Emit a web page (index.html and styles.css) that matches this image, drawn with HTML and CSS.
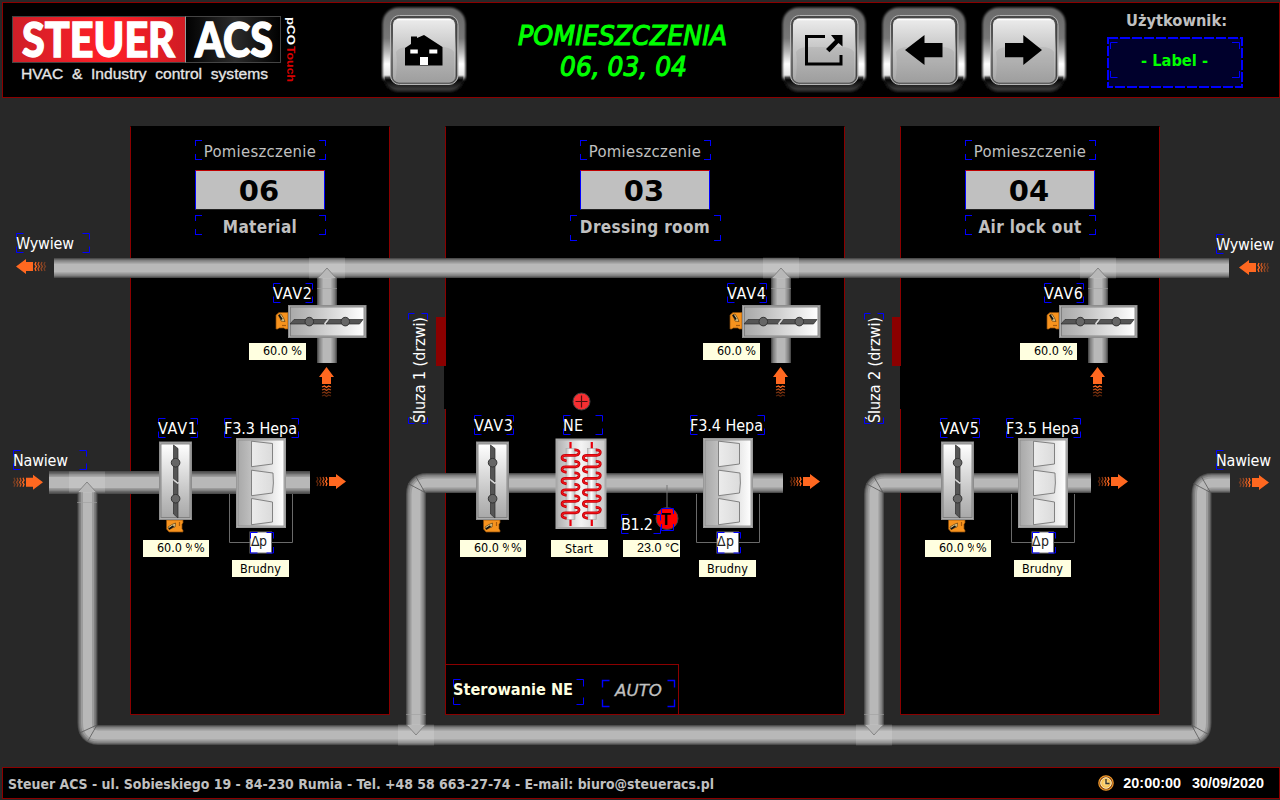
FILE: index.html
```html
<!DOCTYPE html>
<html lang="pl">
<head>
<meta charset="utf-8">
<title>Steuer ACS</title>
<link rel="stylesheet" href="styles.css">
</head>
<body>
<svg class="defs" width="0" height="0">
  <defs>
    <linearGradient id="rim" x1="0" y1="0" x2="0" y2="1">
      <stop offset="0" stop-color="#6a6a6a"/><stop offset=".36" stop-color="#777"/><stop offset=".52" stop-color="#b4b4b4"/>
      <stop offset=".68" stop-color="#fff"/><stop offset=".82" stop-color="#e6e6e6"/><stop offset=".85" stop-color="#444"/><stop offset=".88" stop-color="#050505"/><stop offset="1" stop-color="#3c3c3c"/>
    </linearGradient>
    <linearGradient id="face" x1="0" y1="0" x2="0" y2="1">
      <stop offset="0" stop-color="#ececec"/><stop offset=".47" stop-color="#c6c6c6"/><stop offset="1" stop-color="#a9a9a9"/>
    </linearGradient>
    <linearGradient id="frame" x1="0" y1="0" x2="0" y2="1">
      <stop offset="0" stop-color="#4a4a4a"/><stop offset=".3" stop-color="#666"/><stop offset=".5" stop-color="#999"/><stop offset="1" stop-color="#777"/>
    </linearGradient>
    <linearGradient id="steel"><stop offset="0" stop-color="#a9a9a9"/><stop offset=".2" stop-color="#b8b8b8"/><stop offset="1" stop-color="#fff"/></linearGradient>
    <linearGradient id="steelMid"><stop offset="0" stop-color="#b0b0b0"/><stop offset=".5" stop-color="#f4f4f4"/><stop offset="1" stop-color="#c8c8c8"/></linearGradient>
    <linearGradient id="tube"><stop offset="0" stop-color="#bbb"/><stop offset=".45" stop-color="#fff"/><stop offset="1" stop-color="#bbb"/></linearGradient>
    <linearGradient id="pocketFill"><stop offset="0" stop-color="#fafafa"/><stop offset="1" stop-color="#d6d6d6"/></linearGradient>
    <linearGradient id="logoRed"><stop offset="0" stop-color="#cf1f28"/><stop offset=".55" stop-color="#ff1f27"/><stop offset="1" stop-color="#d01c24"/></linearGradient>
    <linearGradient id="logoDark"><stop offset="0" stop-color="#000"/><stop offset=".64" stop-color="#000"/><stop offset=".83" stop-color="#2b2b2b"/><stop offset="1" stop-color="#000"/></linearGradient>
    <radialGradient id="gold"><stop offset="0" stop-color="#ffe9a0"/><stop offset="1" stop-color="#f5b63c"/></radialGradient>
    <filter id="soft" x="-10%" y="-10%" width="120%" height="120%"><feGaussianBlur stdDeviation="1"/></filter>

    <g id="plate">
      <rect x="1.5" y="1.5" width="83" height="84" rx="16" fill="url(#rim)" filter="url(#soft)"/>
      <rect x="3.5" y="3.5" width="79" height="80" rx="14" fill="url(#rim)"/>
      <rect x="9.500" y="9.500" width="67.500" height="69" rx="9" fill="url(#frame)" stroke="#b5b5b5"/>
      <rect x="11" y="11" width="64.500" height="66" rx="7" fill="none" stroke="#444"/>
      <rect x="12" y="12.500" width="62" height="64" rx="6" fill="url(#face)"/>
      <path d="M16 13.500H70" stroke="#fff" stroke-width="1.500"/>
      <path d="M14 76Q17 60 15 46Q18 41 27 41H60Q70 41 73 46V72Q73 76 68 76Z" fill="#000" opacity=".06"/>
    </g>

    <g id="actuator">
      <path d="M-12 10L-9 7.500H0V24H-3L-4 23H-9L-10 24H-12Z" fill="#f7931e" stroke="#8a4a08" stroke-width=".7"/>
      <path d="M-9.500 10L-7 9L-4.500 13L-3 16.500L-7 16L-8 13Z" fill="#e8cf8e" stroke="#5a3a10" stroke-width=".7"/>
      <path d="M-9 10L-6 14.500" stroke="#111" stroke-width="1.800"/>
      <path d="M-6 20.500H-2" stroke="#a85b0c" stroke-width="1.200"/>
    </g>
    <g id="damper">
      <use href="#actuator"/>
      <rect x=".5" y=".5" width="77.500" height="32" fill="#aeaeae" stroke="#8d8d8d"/>
      <rect x="2.500" y="2" width="73.500" height="29" fill="url(#steel)" stroke="#777" stroke-width=".8"/>
      <path d="M2 19L6 14.500H40L36.500 19Z" fill="#555" stroke="#2c2c2c" stroke-width=".7"/>
      <path d="M38 19L41.500 14.500H75L71.500 19Z" fill="#555" stroke="#2c2c2c" stroke-width=".7"/>
      <path d="M36.500 19L40 14.500" stroke="#ddd" stroke-width="1.300"/>
      <circle cx="21.300" cy="16.600" r="4.300" fill="#666" stroke="#333"/>
      <circle cx="57.300" cy="16.600" r="4.300" fill="#666" stroke="#333"/>
    </g>
    <g id="filter">
      <path d="M229.500 494V542.500H292.500V494" class="capillary"/>
      <rect x="236.500" y="438.500" width="49" height="89" fill="#bbb" stroke="#999"/>
      <rect x="238" y="440" width="46" height="86" fill="url(#steel)" stroke="#888" stroke-width=".8"/>
      <g class="pocket"><path d="M251.500 441.200L272.500 443.500V464L251.500 466.700Z"/><path d="M251.500 470.200L273 473Q274 483 272.500 493L251.500 495.700Z"/><path d="M251.500 498.500L272.500 502V522L251.500 524.700Z"/></g>
      <rect x="250" y="532" width="21.500" height="21" fill="#fff" stroke="#777"/>
    </g>
    <g id="flow">
      <path d="M0 0L10 -7.500V-4.500H17V4.500H10V7.500Z" fill="#ff6820"/>
      <g fill="none" stroke="#ff6820" stroke-width="1.300">
        <path d="M20 -4.500L19 -2L20.500 0L19 2L20 4.500"/><path d="M23 -4.500L22 -2L23.500 0L22 2L23 4.500" opacity=".75"/>
        <path d="M26 -4.500L25 -2L26.500 0L25 2L26 4.500" opacity=".5"/><path d="M29 -4.500L28 -2L29.500 0L28 2L29 4.500" opacity=".35"/>
      </g>
    </g>
    <path id="turn" d="M4 -5.500Q9 -5.500 8.500 -2.500Q8 0 5 0H-5Q-8.500 0 -8.500 2.800Q-8.500 5 -4 5.500"/>
    <g id="turns"><use href="#turn" y="-28.700"/><use href="#turn" y="-17.200"/><use href="#turn" y="-5.700"/><use href="#turn" y="5.800"/><use href="#turn" y="17.300"/><use href="#turn" y="28.800"/></g>
    <g id="coil">
      <path d="M0 -42V-35M0 35V42" stroke="#e8000c" stroke-width="2.200"/>
      <rect x="-4.500" y="-35.500" width="9" height="71" fill="url(#tube)" stroke="#aaa" stroke-width=".6"/>
      <use href="#turns" fill="none" stroke="#c4000c" stroke-width="2.700"/>
      <use href="#turns" fill="none" stroke="#ff1a1a" stroke-width="1"/>
    </g>
    <g id="tee">
      <rect x="-18" y="-10.500" width="36" height="21" fill="#fff" opacity=".15"/>
      <path d="M-9 10L0 0L9 10" fill="#b8b8b8" stroke="#858585"/>
      <path d="M-10 20.500H10" stroke="#a0a0a0" opacity=".6"/>
    </g>
    <path id="ducts" d="M54 268H1229M327 268V363M781 268V363M1098 268V363M1230 483H1212Q1201.500 483 1201.500 494V723Q1201.500 735 1191 735H98Q87.500 735 87.500 723V484M416 735V494Q416 483 427 483H783M874 735V494Q874 483 885 483H1091"/>
  </defs>
</svg>

<header class="topbar">
  <svg class="logo" width="300" height="90" viewBox="5 5 300 90">
    <rect x="12.500" y="16.500" width="268" height="46" fill="url(#logoDark)" stroke="#444"/>
    <rect x="13" y="17" width="172" height="45" fill="url(#logoRed)"/>
    <path d="M185.500 16.500V62.500" stroke="#999"/>
    <text class="brand" x="22" y="57" textLength="153" lengthAdjust="spacingAndGlyphs">STEUER</text>
    <text class="brand" x="195" y="57" textLength="78" lengthAdjust="spacingAndGlyphs">ACS</text>
    <text class="tagline" x="21" y="79" textLength="247" lengthAdjust="spacingAndGlyphs">HVAC &amp; Industry control systems</text>
    <text class="touch" transform="translate(287 17) rotate(90)" textLength="28" lengthAdjust="spacingAndGlyphs">pCO</text>
    <text class="touch red" transform="translate(287 46) rotate(90)" textLength="36" lengthAdjust="spacingAndGlyphs">Touch</text>
  </svg>
  <button class="key home" aria-label="Home">
    <svg width="86" height="87" viewBox="0 0 86 87"><use href="#plate"/><path d="M24 59.500V42L30 38V30.500H36V32L43 29L61.500 41V59.500Z"/><path fill="#fff" d="M29.300 43.500h7.500v4h-7.500zM48.300 43.500h8v4h-8zM39 51h8v8h-8z"/></svg>
  </button>
  <h1 class="title">
    <svg width="250" height="84" viewBox="498 6 250 84">
      <text x="518" y="45" textLength="209" lengthAdjust="spacingAndGlyphs">POMIESZCZENIA</text>
      <text x="560" y="76" textLength="127" lengthAdjust="spacingAndGlyphs">06, 03, 04</text>
    </svg>
  </h1>
  <nav class="keys">
    <button class="key" aria-label="Open"><svg width="86" height="87" viewBox="0 0 86 87"><use href="#plate"/><path d="M44 30.500H25.500V58H60V49" fill="none" stroke="#000" stroke-width="3"/><path d="M50 29H61.500V40.500L57.500 37L48.500 46.300L45 43L54 34Z"/></svg></button>
    <button class="key" aria-label="Previous"><svg width="86" height="87" viewBox="0 0 86 87"><use href="#plate"/><path d="M24 44L43.500 29V37H61.500V51.300H43.500V59Z"/></svg></button>
    <button class="key" aria-label="Next"><svg width="86" height="87" viewBox="0 0 86 87"><use href="#plate"/><path d="M61 44L42.300 29V37H24V51.300H42.300V59Z"/></svg></button>
  </nav>
  <div class="user">
    <svg width="140" height="80" viewBox="1105 10 140 80">
      <text class="bold grey" x="1126" y="26" textLength="101" lengthAdjust="spacingAndGlyphs">Użytkownik:</text>
      <rect x="1108" y="38" width="134" height="49" fill="#00002c" stroke="#00f" stroke-width="2" stroke-dasharray="10 2"/>
      <path class="mark" d="M1117.500 42.500H1110.500V49M1232 42.500H1239.500V49M1117.500 77.500H1110.500V71M1232 77.500H1239.500V71"/>
      <text class="bold green" x="1141" y="66" textLength="67" lengthAdjust="spacingAndGlyphs">- Label -</text>
    </svg>
  </div>
</header>

<main class="plant">
  <section class="room">
    <p class="kind mark-box">Pomieszczenie</p>
    <h2 class="number">06</h2>
    <p class="name mark-box">Material</p>
  </section>
  <section class="room">
    <p class="kind mark-box">Pomieszczenie</p>
    <h2 class="number">03</h2>
    <p class="name mark-box wide">Dressing room</p>
    <div class="control"><svg width="232" height="50" viewBox="446 665 232 50">
      <rect class="mark m-ctl" x="453.500" y="679.500" width="130" height="25"/>
      <rect class="mark m-auto" x="602.500" y="680.500" width="72" height="26"/>
      <text class="bold cream" x="453" y="695" textLength="120" lengthAdjust="spacingAndGlyphs">Sterowanie NE</text>
      <text class="auto" x="615" y="696" textLength="47" lengthAdjust="spacingAndGlyphs">AUTO</text>
    </svg></div>
  </section>
  <section class="room">
    <p class="kind mark-box">Pomieszczenie</p>
    <h2 class="number">04</h2>
    <p class="name mark-box">Air lock out</p>
  </section>

  <svg class="diagram" width="1280" height="669" viewBox="0 98 1280 669">
    <path d="M444 366h3v43h-3zM900 366h2v43h-2z" fill="#000"/>
    <path d="M436 317h10v49h-10zM892 317h9v49h-9z" fill="#8b0000"/>

    <g fill="none">
      <use href="#ducts" class="d1"/><path class="d1 thick" d="M49 482.500H310"/>
      <use href="#ducts" class="d2"/><path class="d2 thick" d="M49 482.500H310"/>
      <use href="#ducts" class="d3"/><path class="d3 thick" d="M49 482.500H310"/>
      <use href="#ducts" class="d4"/><path class="d4 thick" d="M49 482.500H310"/>
      <use href="#ducts" class="d5"/><path class="d5 thick" d="M49 482.500H310"/>
    </g>
    <use href="#tee" x="327" y="268"/><use href="#tee" x="781" y="268"/><use href="#tee" x="1098" y="268"/>
    <use href="#tee" x="87" y="482"/>
    <use href="#tee" transform="translate(416 735) scale(1 -1)"/><use href="#tee" transform="translate(874 735) scale(1 -1)"/>
    <path class="fold" d="M408 483.500L425 492.500L415.500 476M866 483.500L883 492.500L873.500 476M1193.500 483.500L1210.500 492.500L1201 476M79.500 733L97 725L87.500 741.500M1208.500 734.500L1191.500 725L1200.500 741.500"/>

    <use href="#damper" x="288" y="305"/><use href="#damper" x="742" y="305"/><use href="#damper" x="1059" y="305"/>
    <use href="#damper" transform="translate(159 520) rotate(-90)"/><use href="#damper" transform="translate(476 520) rotate(-90)"/><use href="#damper" transform="translate(941 520) rotate(-90)"/>
    <use href="#filter"/><use href="#filter" x="467"/><use href="#filter" x="782"/>

    <rect x="556.500" y="439.500" width="49" height="88.500" fill="url(#steelMid)" stroke="#a8a8a8" stroke-width="2"/>
    <use href="#coil" x="570.500" y="484"/><use href="#coil" x="591.800" y="484"/>
    <circle cx="581.500" cy="401.500" r="8.500" fill="#f62f32" stroke="#444"/>
    <path d="M575.500 401.500H587.500M581.500 395.500V407.500" stroke="#501010" stroke-width="1.200"/>
    <path d="M667 485V508" stroke="#777"/>
    <circle cx="667" cy="518.500" r="11" fill="#f00" stroke="#444"/>
    <text class="probe" x="661" y="525" textLength="11">T</text>

    <use href="#flow" x="16" y="266.500"/><use href="#flow" x="1239" y="267.500"/>
    <use href="#flow" transform="translate(43 482.300) scale(-1 1)"/><use href="#flow" transform="translate(346 481.500) scale(-1 1)"/>
    <use href="#flow" transform="translate(820 481.500) scale(-1 1)"/><use href="#flow" transform="translate(1128 481.500) scale(-1 1)"/><use href="#flow" transform="translate(1269 482.500) scale(-1 1)"/>
    <use href="#flow" transform="translate(326.500 367) rotate(90)"/><use href="#flow" transform="translate(780.500 367) rotate(90)"/><use href="#flow" transform="translate(1097.500 367) rotate(90)"/>

    <g class="mark">
      <g class="m-side"><rect x="16.500" y="233.500" width="73" height="19"/><rect x="13.500" y="450.500" width="73" height="19"/><rect x="1216.500" y="234.500" width="73" height="19"/><rect x="1216.500" y="450.500" width="73" height="19"/></g>
      <g class="m-vav"><rect x="273.500" y="283.500" width="39" height="19"/><rect x="727.500" y="283.500" width="39" height="19"/><rect x="1044.500" y="283.500" width="39" height="19"/><rect x="158.500" y="418.500" width="39" height="19"/><rect x="474.500" y="415.500" width="39" height="19"/><rect x="563.500" y="415.500" width="39" height="19"/><rect x="940.500" y="418.500" width="39" height="19"/><rect x="621.500" y="514.500" width="39" height="19"/></g>
      <g class="m-hepa"><rect x="224.500" y="418.500" width="74" height="19"/><rect x="690.500" y="415.500" width="74" height="19"/><rect x="1006.500" y="418.500" width="74" height="19"/></g>
      <g class="m-door"><rect x="408.500" y="313.500" width="19" height="110"/><rect x="864.500" y="313.500" width="19" height="110"/></g>
      <g class="m-dp"><rect x="250.500" y="532.500" width="23" height="20.500"/><rect x="717.500" y="532.500" width="23" height="20.500"/><rect x="1032.500" y="532.500" width="23" height="20.500"/></g>
      <path d="M661.500 514V508.500H673.500V514M661.500 524V530.500H673.500V524"/>
    </g>

    <g class="label">
      <text x="16" y="249" textLength="58">Wywiew</text><text x="1216" y="250" textLength="58">Wywiew</text>
      <text x="13" y="466" textLength="55">Nawiew</text><text x="1216" y="466" textLength="55">Nawiew</text>
      <text x="273" y="299" textLength="39">VAV2</text><text x="727" y="299" textLength="39">VAV4</text><text x="1044" y="299" textLength="39">VAV6</text>
      <text x="158" y="434" textLength="39">VAV1</text><text x="474" y="431" textLength="39">VAV3</text><text x="940" y="434" textLength="39">VAV5</text>
      <text x="563" y="431" textLength="20">NE</text><text x="621" y="530" textLength="32">B1.2</text>
      <text x="224" y="434" textLength="73">F3.3 Hepa</text><text x="690" y="431" textLength="73">F3.4 Hepa</text><text x="1006" y="434" textLength="73">F3.5 Hepa</text>
      <text transform="translate(424.500 423) rotate(-90)" textLength="106">Śluza 1 (drzwi)</text><text transform="translate(880 423) rotate(-90)" textLength="106">Śluza 2 (drzwi)</text>
    </g>
    <g class="delta"><text x="251" y="546" textLength="16">Δp</text><text x="717" y="546" textLength="17">Δp</text><text x="1032" y="546" textLength="17">Δp</text></g>

    <path class="field" d="M249 343h57v17h-57zM703 343h57v17h-57zM1020 343h57v17h-57zM143 540h66v17h-66zM460 540h66v17h-66zM925 540h66v17h-66zM551 540h57v17h-57zM623 540h57v17h-57zM232 560h57v17h-57zM699 560h57v17h-57zM1014 560h57v17h-57z"/>
    <g class="value">
      <text x="263" y="355" textLength="39">60.0 %</text><text x="717" y="355" textLength="39">60.0 %</text><text x="1034" y="355" textLength="39">60.0 %</text>
      <text x="157" y="552" textLength="39">60.0 %</text><text x="474" y="552" textLength="39">60.0 %</text><text x="939" y="552" textLength="39">60.0 %</text>
      <path class="cover" d="M192 541h16v15h-16zM509 541h16v15h-16zM974 541h16v15h-16z"/>
      <text x="194" y="552" textLength="11">%</text><text x="511" y="552" textLength="11">%</text><text x="976" y="552" textLength="11">%</text>
      <text x="565" y="553" textLength="28">Start</text>
      <text x="240" y="573" textLength="41">Brudny</text><text x="707" y="573" textLength="41">Brudny</text><text x="1022" y="573" textLength="41">Brudny</text>
      <text class="arial" x="637" y="552" textLength="42" lengthAdjust="spacingAndGlyphs">23.0 °C</text>
    </g>
  </svg>
</main>

<footer class="bottombar">
  <svg width="720" height="30" viewBox="3 768 720 30"><text class="bold grey small" x="8" y="789" textLength="706" lengthAdjust="spacingAndGlyphs">Steuer ACS - ul. Sobieskiego 19 - 84-230 Rumia - Tel. +48 58 663-27-74 - E-mail: biuro@steueracs.pl</text></svg>
  <div class="clock">
    <svg width="16" height="16" viewBox="0 0 16 16"><circle cx="8" cy="8" r="7.200" fill="#7c3c0c" stroke="#f09a2c" stroke-width="1.200"/><circle cx="8" cy="8" r="5.300" fill="url(#gold)" stroke="#fff3c8"/><path d="M8 4V8.500H11.500" fill="none" stroke="#333" stroke-width="1.400"/></svg>
    <time class="time">20:00:00</time><time>30/09/2020</time>
  </div>
</footer>
</body>
</html>
```
FILE: styles.css
```css
* { box-sizing: border-box; }
body {
  margin: 0;
  width: 1280px;
  height: 800px;
  overflow: hidden;
  display: flex;
  flex-direction: column;
  background: #282828;
  font-family: "DejaVu Sans Condensed", "DejaVu Sans", sans-serif;
  font-stretch: condensed;
  color: #c0c0c0;
}
h1, h2, p { margin: 0; font-weight: normal; }
svg { display: block; flex: none; }
.defs { position: absolute; }
text { white-space: pre; }

.topbar {
  height: 96px;
  margin: 2px 0 0 2px;
  border: 1px solid #8b0000;
  background: #000;
  display: flex;
  align-items: flex-start;
  flex: none;
}
.logo { margin: 2px 0 0 2px; }
.brand { font: 900 47px "Lato", sans-serif; fill: #fff; stroke: #fff; stroke-width: 1.3; }
.tagline { font: 14.5px "Liberation Sans", sans-serif; fill: #e6e6e6; stroke: #e6e6e6; stroke-width: .3; word-spacing: 4px; }
.touch { font: bold 11px "Liberation Sans", sans-serif; fill: #fff; }
.red { fill: #d80000; }
.key { border: 0; padding: 0; background: none; width: 86px; height: 87px; flex: none; }
.home { margin: 3px 0 0 76px; }
.title { margin: 3px 0 0 31px; }
.title svg { overflow: visible; }
.title text { font: italic 27px "DejaVu Sans", sans-serif; fill: #0f0; stroke: #0f0; stroke-width: 1.1; }
.keys { display: flex; gap: 14px; margin: 3px 0 0 33px; }
.user { margin: 7px 0 0 38px; }

.bold { font-weight: bold; font-size: 16px; }
.grey { fill: #c0c0c0; }
.green { fill: #0f0; }
.cream { fill: #ffffe0; }
.small { font-size: 14px; }

.plant {
  position: relative;
  height: 669px;
  flex: none;
  display: grid;
  grid-template-columns: 260px 400px 260px;
  column-gap: 55px;
  padding: 28px 0 52px 130px;
}
.room {
  border: 1px solid #8b0000;
  border-top-color: #000;
  background: #000;
  display: flex;
  flex-direction: column;
  align-items: center;
  padding-top: 13px;
}
.mark-box {
  --c: linear-gradient(#00f, #00f);
  background: var(--c) 0 0 / 7px 1px, var(--c) 100% 0 / 7px 1px, var(--c) 0 100% / 7px 1px, var(--c) 100% 100% / 7px 1px,
    var(--c) 0 0 / 1px 6px, var(--c) 100% 0 / 1px 6px, var(--c) 0 100% / 1px 6px, var(--c) 100% 100% / 1px 6px;
  background-repeat: no-repeat;
  width: 131px;
  height: 20px;
  text-align: center;
  white-space: nowrap;
}
.kind { font-size: 16.5px; line-height: 24px; letter-spacing: .3px; }
.number {
  width: 130px;
  height: 40px;
  margin: 10px 0 5px;
  padding-right: 2px;
  background: #c0c0c0;
  border: 1px solid #00f;
  border-top-color: #c00000;
  border-bottom-color: #222;
  color: #000;
  font: bold 29px/40px "DejaVu Sans", sans-serif;
  text-align: center;
}
.name { font-size: 17px; font-weight: bold; line-height: 24px; letter-spacing: .35px; }
.wide { width: 151px; height: 26px; }
.control { margin-top: auto; align-self: flex-start; border: 1px solid #8b0000; border-width: 1px 1px 0 0; height: 50px; overflow: hidden; }
.auto { font: italic 16px "DejaVu Sans", sans-serif; fill: #c0c0c0; stroke: #c0c0c0; stroke-width: .3; }

.diagram { position: absolute; left: 0; top: 0; }
.d1 { stroke: #4c4c4c; stroke-width: 20px; }
.d2 { stroke: #686868; stroke-width: 18px; }
.d3 { stroke: #808080; stroke-width: 16px; }
.d4 { stroke: #9c9c9c; stroke-width: 13px; }
.d5 { stroke: #b8b8b8; stroke-width: 9px; }
.d1.thick { stroke-width: 23px; }
.d2.thick { stroke-width: 20px; }
.d3.thick { stroke-width: 17px; }
.d4.thick { stroke-width: 14px; }
.d5.thick { stroke-width: 11px; }
.fold { fill: none; stroke: #555; stroke-width: .8; }
.capillary { fill: none; stroke: #6a6a6a; }
.pocket { fill: url(#pocketFill); fill-opacity: .75; stroke: #777; stroke-width: .9; }

.mark { fill: none; stroke: #00f; }
.m-side { stroke-dasharray: 7 59 13 7 13 59 13 7 6; }
.m-vav { stroke-dasharray: 7 25 13 7 13 25 13 7 6; }
.m-hepa { stroke-dasharray: 7 60 13 7 13 60 13 7 6; }
.m-door { stroke-dasharray: 6 7 12 98 12 7 12 98 6; }
.m-dp { stroke-dasharray: 7 9 13 8.5 13 9 13 8.5 6; }
.m-ctl { stroke-dasharray: 7 116 14 11 14 116 14 11 7; }
.m-auto { stroke-dasharray: 7 58 14 12 14 58 14 12 7; stroke-width: 1.4; }

.label { font-size: 16px; fill: #fff; }
.delta { font-size: 14px; fill: #222; }
.probe { font: bold 16px "Liberation Sans", sans-serif; fill: #000; }
.field, .cover { fill: #ffffe0; }
.value { font-size: 12.5px; fill: #000; }
.arial { font: 13.5px "Liberation Sans", sans-serif; }

.bottombar {
  height: 32px;
  margin-left: 2px;
  border: 1px solid #8b0000;
  background: #000;
  display: flex;
  justify-content: space-between;
  flex: none;
}
.clock { display: flex; align-items: center; padding-right: 15px; font: bold 14.4px "Liberation Sans", sans-serif; color: #fff; }
.time { margin: 0 11px 0 9px; }
```
